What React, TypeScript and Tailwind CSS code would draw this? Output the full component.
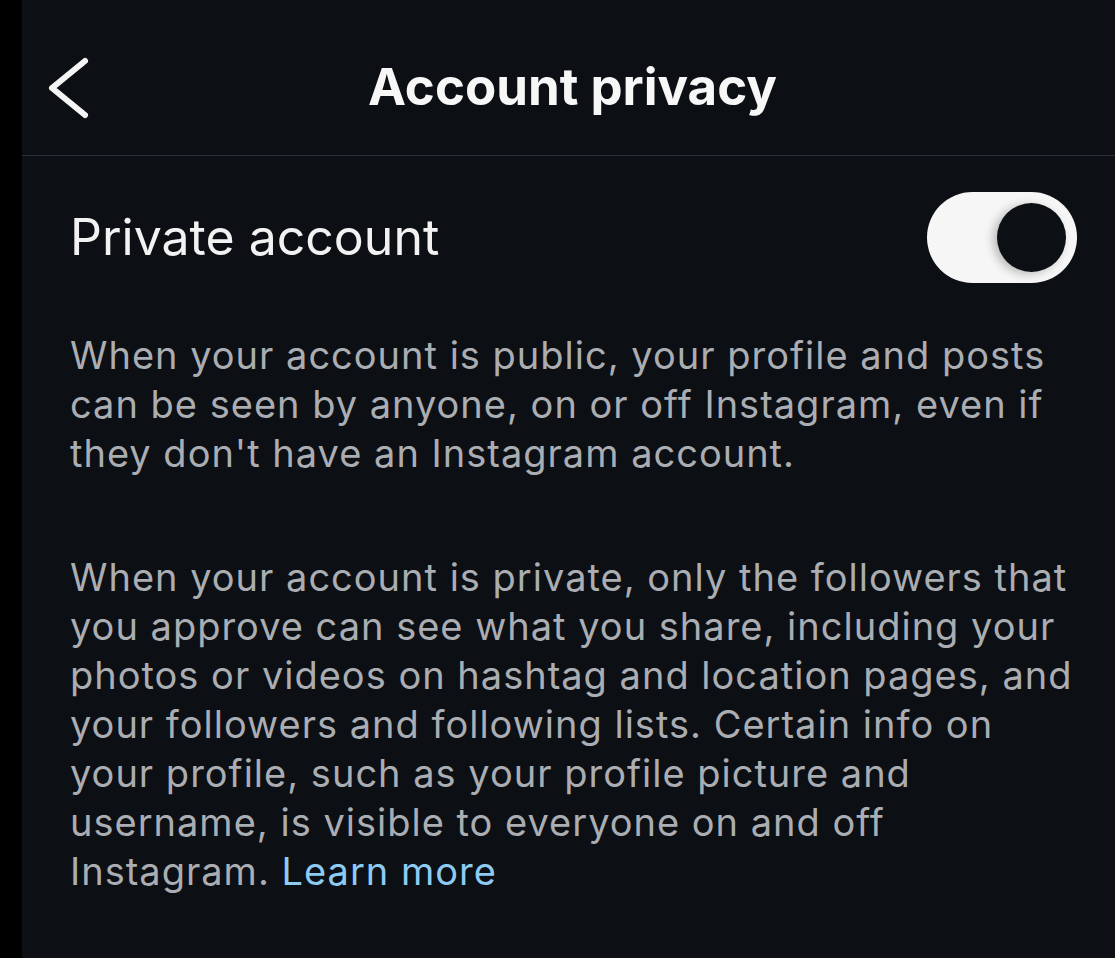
export default function App() {
  return (
    <div className="flex h-[958px] w-[1115px] bg-black" style={{ fontFamily: 'Inter, "Noto Sans", sans-serif' }}>
      <div className="w-[22px] shrink-0 bg-black" />
      <div className="flex-1 bg-[#0c0f14]">
        {/* header */}
        <div className="relative flex h-[156px] items-center justify-center border-b border-[#2a2d33] pl-[8px] pt-[20px]">
          <button className="absolute left-[26px] top-[56px]">
            <svg width="44" height="64" viewBox="0 0 44 64" fill="none">
              <polyline points="37,5 4,32 37,59" stroke="#f5f5f5" strokeWidth="6" strokeLinecap="round" strokeLinejoin="round" />
            </svg>
          </button>
          <h1 className="text-[51px] font-bold text-[#f7f7f7]">Account privacy</h1>
        </div>

        <div className="pl-[48px] pr-[38px]">
          <div className="flex h-[162px] items-center justify-between">
            <span className="text-[50px] font-normal text-[#f2f2f2]">Private account</span>
            <div className="relative h-[91px] w-[150px] rounded-full bg-[#f6f6f6]">
              <div className="absolute right-[11px] top-[11px] h-[69px] w-[69px] rounded-full bg-[#0c0f14] shadow-[-4px_2px_10px_rgba(0,0,0,0.25)]" />
            </div>
          </div>

          <div className="pt-[13px] text-[38px] leading-[49px] tracking-[1px] text-[#aaadb2]">
            <p>
              When your account is public, your profile and posts can be seen by anyone, on or off Instagram, even if they don't have an Instagram account.
            </p>
            <p className="mt-[75px]">
              When your account is private, only the followers that you approve can see what you share, including your photos or videos on hashtag and location pages, and your followers and following lists. Certain info on your profile, such as your profile picture and username, is visible to everyone on and off Instagram.{' '}
              <span className="text-[#8ecbf2]">Learn more</span>
            </p>
          </div>
        </div>
      </div>
    </div>
  )
}
